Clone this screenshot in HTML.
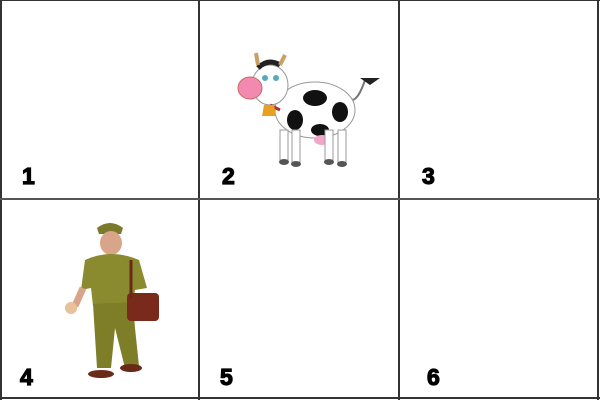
<!DOCTYPE html>
<html><head><style>
body{margin:0;width:600px;height:400px;background:#fff;position:relative;overflow:hidden;font-family:"Liberation Sans",sans-serif}
.l{position:absolute;background:#333}
.n{position:absolute;font-weight:bold;font-size:23px;color:#000;line-height:1;-webkit-text-stroke:1.2px #000}
</style></head><body>
<div class="l" style="left:0;top:0;width:600px;height:1px"></div>
<div class="l" style="left:0;top:0;width:2px;height:400px"></div>
<div class="l" style="left:597px;top:0;width:2px;height:400px"></div>
<div class="l" style="left:0;top:397px;width:600px;height:2px"></div>
<div class="l" style="left:198px;top:0;width:2px;height:400px"></div>
<div class="l" style="left:398px;top:0;width:2px;height:400px"></div>
<div class="l" style="left:0;top:198px;width:600px;height:2px;background:#555"></div>
<div class="n" style="left:22px;top:165px">1</div>
<div class="n" style="left:222px;top:165px">2</div>
<div class="n" style="left:422px;top:165px">3</div>
<div class="n" style="left:20px;top:366px">4</div>
<div class="n" style="left:220px;top:366px">5</div>
<div class="n" style="left:427px;top:366px">6</div>
<svg style="position:absolute;left:230px;top:50px" width="155" height="120">
<path d="M135 30 Q125 60 115 45" stroke="#777" stroke-width="2" fill="none"/>
<path d="M130 28 L150 28 L140 35Z" fill="#222"/>
<ellipse cx="85" cy="60" rx="40" ry="28" fill="#fff" stroke="#999"/>
<ellipse cx="85" cy="48" rx="12" ry="8" fill="#111"/>
<ellipse cx="110" cy="62" rx="8" ry="10" fill="#111"/>
<ellipse cx="65" cy="70" rx="8" ry="10" fill="#111"/>
<ellipse cx="90" cy="80" rx="9" ry="6" fill="#111"/>
<ellipse cx="92" cy="90" rx="8" ry="5" fill="#f2a6c8"/>
<rect x="50" y="80" width="8" height="30" fill="#fff" stroke="#999"/>
<rect x="62" y="80" width="8" height="32" fill="#fff" stroke="#999"/>
<rect x="95" y="80" width="8" height="30" fill="#fff" stroke="#999"/>
<rect x="108" y="80" width="8" height="32" fill="#fff" stroke="#999"/>
<ellipse cx="54" cy="112" rx="5" ry="3" fill="#555"/><ellipse cx="66" cy="114" rx="5" ry="3" fill="#555"/>
<ellipse cx="99" cy="112" rx="5" ry="3" fill="#555"/><ellipse cx="112" cy="114" rx="5" ry="3" fill="#555"/>
<ellipse cx="40" cy="35" rx="18" ry="20" fill="#fff" stroke="#999"/>
<path d="M28 18 Q38 8 50 15" stroke="#222" stroke-width="5" fill="none"/>
<path d="M28 15 L26 3 M50 15 L55 5" stroke="#c9a060" stroke-width="4"/>
<ellipse cx="20" cy="38" rx="12" ry="11" fill="#f28ab0" stroke="#c66"/>
<circle cx="35" cy="28" r="3" fill="#5ab"/><circle cx="46" cy="28" r="3" fill="#5ab"/>
<path d="M40 55 L50 60" stroke="#a33" stroke-width="3"/>
<path d="M34 55 L44 55 L46 66 L32 66Z" fill="#e8a020"/>
</svg>
<svg style="position:absolute;left:55px;top:218px" width="110" height="170">
<path d="M42 10 Q55 0 68 10 L66 16 L44 16Z" fill="#7a7a2a"/>
<ellipse cx="56" cy="25" rx="11" ry="12" fill="#d9a58a"/>
<path d="M30 42 Q56 30 84 42 L92 70 L80 72 L78 85 L38 88 L36 70 L26 72Z" fill="#8a8a2e"/>
<path d="M38 86 L78 84 L80 110 L84 148 L70 150 L60 110 L56 150 L42 150 Z" fill="#7e7e28"/>
<path d="M28 70 L20 88" stroke="#d9a58a" stroke-width="7"/>
<circle cx="16" cy="90" r="6" fill="#e8c09a"/>
<rect x="72" y="75" width="32" height="28" rx="4" fill="#7a2a1a"/>
<path d="M76 42 L76 80" stroke="#6a2a1a" stroke-width="3"/>
<ellipse cx="46" cy="156" rx="13" ry="4" fill="#6a2a1a"/>
<ellipse cx="76" cy="150" rx="11" ry="4" fill="#6a2a1a"/>
</svg>
</body></html>
